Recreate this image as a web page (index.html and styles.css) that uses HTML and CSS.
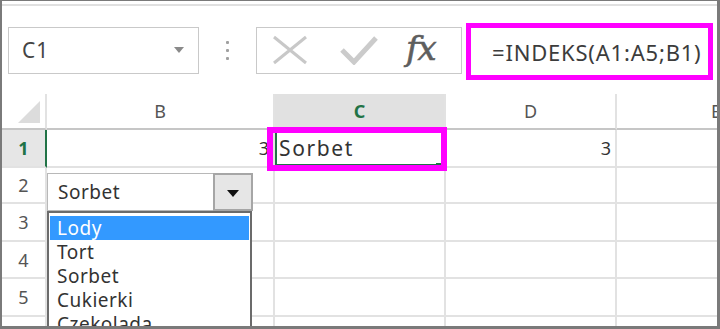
FILE: index.html
```html
<!DOCTYPE html>
<html>
<head>
<meta charset="utf-8">
<link rel="stylesheet" href="styles.css">
</head>
<body>
<div class="frame">
  <div class="ribbon-edge"></div>
  <div class="toolbar">
    <div class="namebox"><span>C1</span><span class="nb-arrow"></span></div>
    <div class="dots"><i></i><i></i><i></i></div>
    <div class="fbuttons">
      <svg class="ico-x" width="36" height="30" viewBox="0 0 36 30"><path d="M2 2 L34 28 M34 2 L2 28" stroke="#c8c8c8" stroke-width="3" fill="none"/></svg>
      <svg class="ico-check" width="38" height="30" viewBox="0 0 38 30"><path d="M2 15 L14 27 L36 3" stroke="#cbcbcb" stroke-width="5" fill="none"/></svg>
      <span class="fx">fx</span>
    </div>
    <div class="fbox">=INDEKS(A1:A5;B1)</div>
  </div>
  <div class="sheet">
    <div class="hdr corner"><svg width="22" height="22" viewBox="0 0 22 22"><polygon points="22,0 22,22 0,22" fill="#dcdcdc"/></svg></div>
    <div class="hdr col">B</div>
    <div class="hdr col sel">C</div>
    <div class="hdr col">D</div>
    <div class="hdr col">E</div>

    <div class="hdr row sel">1</div>
    <div class="cell num">3</div>
    <div class="cell active"><span class="c1text">Sorbet</span><span class="handle"></span><span class="hl"></span></div>
    <div class="cell num">3</div>
    <div class="cell"></div>

    <div class="hdr row">2</div>
    <div class="cell"></div><div class="cell"></div><div class="cell"></div><div class="cell"></div>
    <div class="hdr row">3</div>
    <div class="cell"></div><div class="cell"></div><div class="cell"></div><div class="cell"></div>
    <div class="hdr row">4</div>
    <div class="cell"></div><div class="cell"></div><div class="cell"></div><div class="cell"></div>
    <div class="hdr row">5</div>
    <div class="cell"></div><div class="cell"></div><div class="cell"></div><div class="cell"></div>
    <div class="hdr row"></div>
    <div class="cell"></div><div class="cell"></div><div class="cell"></div><div class="cell"></div>

    <div class="combo">
      <div class="combo-field">Sorbet</div>
      <div class="combo-btn"><span class="tri"></span></div>
    </div>
    <div class="list">
      <div class="item on">Lody</div>
      <div class="item">Tort</div>
      <div class="item">Sorbet</div>
      <div class="item">Cukierki</div>
      <div class="item">Czekolada</div>
    </div>
  </div>
</div>
</body>
</html>
```

FILE: styles.css
```css
html, body {
  margin: 0;
  padding: 0;
  background: #ffffff;
}
.frame {
  width: 720px;
  height: 329px;
  box-sizing: border-box;
  border-top: 1px solid #7a7a7a;
  border-left: 2px solid #7a7a7a;
  border-right: 3px solid #7a7a7a;
  border-bottom: 3px solid #7a7a7a;
  overflow: hidden;
  display: flex;
  flex-direction: column;
  background: #fff;
  font-family: "Noto Sans", "Open Sans", sans-serif;
  color: #444;
}
.ribbon-edge {
  height: 2px;
  margin-top: 3px;
  background: #e0e0e0;
  flex: none;
}
.toolbar {
  height: 88px;
  flex: none;
  display: flex;
  align-items: center;
  padding-left: 6px;
}
.namebox {
  width: 191px;
  height: 47px;
  box-sizing: border-box;
  border: 1px solid #c9c9c9;
  display: flex;
  align-items: center;
  justify-content: space-between;
  padding: 0 14px 0 13px;
  font-size: 21px;
  letter-spacing: 1px;
  color: #444;
}
.nb-arrow {
  width: 0;
  height: 0;
  border-left: 5px solid transparent;
  border-right: 5px solid transparent;
  border-top: 6px solid #8a8a8a;
}
.dots {
  margin-left: 27px;
  width: 3px;
  display: flex;
  flex-direction: column;
  gap: 5px;
}
.dots i {
  width: 3px;
  height: 3px;
  background: #a0a0a0;
  border-radius: 1px;
}
.fbuttons {
  margin-left: 27px;
  width: 206px;
  height: 47px;
  box-sizing: border-box;
  border: 1px solid #c9c9c9;
  display: flex;
  align-items: center;
}
.ico-x { margin-left: 15px; }
.ico-check { margin-left: 32px; }
.fx {
  margin-left: 28px;
  font-family: "DejaVu Serif", "Liberation Serif", serif;
  font-style: italic;
  font-size: 34px;
  letter-spacing: -1px;
  color: #5e5e5e;
  line-height: 1;
  margin-top: -4px;
  -webkit-text-stroke: 0.6px #5e5e5e;
}
.fbox {
  margin-left: 4px;
  margin-top: 3px;
  width: 247px;
  height: 57px;
  box-sizing: border-box;
  border: 5px solid #ff00ff;
  padding-left: 21px;
  display: flex;
  align-items: center;
  font-size: 22px;
  letter-spacing: 0.8px;
  color: #3c3c3c;
  white-space: nowrap;
  overflow: hidden;
}
.sheet {
  flex: 1;
  position: relative;
  display: grid;
  grid-template-columns: 45px 228px 171px 171px 200px;
  grid-template-rows: 36px 38px 36px 38px 37px 38px 40px;
}
.hdr, .cell {
  box-sizing: border-box;
  border-right: 2px solid #e2e2e2;
  border-bottom: 2px solid #e2e2e2;
}
.hdr {
  display: flex;
  align-items: center;
  justify-content: center;
  font-size: 18px;
  color: #555;
}
.hdr.col {
  border-bottom-color: #c6c6c6;
}
.hdr.corner {
  border-bottom-color: #c6c6c6;
  align-items: flex-end;
  justify-content: flex-end;
  padding: 0 5px 5px 0;
}
.hdr.col.sel {
  background: #e1e1e1;
  color: #217346;
  font-weight: bold;
  border-bottom-color: #217346;
}
.hdr.row.sel {
  background: #e6e6e6;
  color: #217346;
  font-weight: bold;
  border-right-color: #217346;
}
.cell {
  font-size: 18px;
  color: #333;
  display: flex;
  align-items: center;
}
.cell.num {
  justify-content: flex-end;
  padding-right: 4px;
}
.cell.active {
  position: relative;
  box-shadow: inset 2px 0 0 #217346, inset 0 -2px 0 #217346;
}
.c1text {
  padding-left: 4px;
  font-size: 21px;
  letter-spacing: 1.6px;
  color: #333;
}
.handle {
  position: absolute;
  right: 3px;
  bottom: -2px;
  width: 5px;
  height: 5px;
  background: #217346;
}
.hl {
  position: absolute;
  top: -3px;
  left: -8px;
  right: -3px;
  bottom: -5px;
  border: 6px solid #ff00ff;
}
.combo {
  position: absolute;
  left: 45px;
  top: 79px;
  width: 206px;
  height: 38px;
  display: flex;
}
.combo-field {
  flex: 1;
  box-sizing: border-box;
  background: #fff;
  border: 1px solid #b8b8b8;
  border-right: none;
  padding-left: 10px;
  display: flex;
  align-items: center;
  font-size: 19px;
  letter-spacing: 0.5px;
  color: #333;
}
.combo-btn {
  width: 40px;
  box-sizing: border-box;
  background: #e6e6e6;
  border: 2px solid #a6a6a6;
  display: flex;
  align-items: center;
  justify-content: center;
}
.tri {
  width: 0;
  height: 0;
  border-left: 6px solid transparent;
  border-right: 6px solid transparent;
  border-top: 7px solid #111;
  margin-top: 3px;
}
.list {
  position: absolute;
  left: 45px;
  top: 117px;
  width: 205px;
  height: 130px;
  box-sizing: border-box;
  border: 2px solid #6b6b6b;
  background: #fff;
  padding: 3px 1px 0 1px;
}
.item {
  height: 24px;
  line-height: 24px;
  padding-left: 7px;
  font-size: 19px;
  letter-spacing: 0.5px;
  color: #333;
}
.item.on {
  background: #3399ff;
  color: #fff;
}
```
